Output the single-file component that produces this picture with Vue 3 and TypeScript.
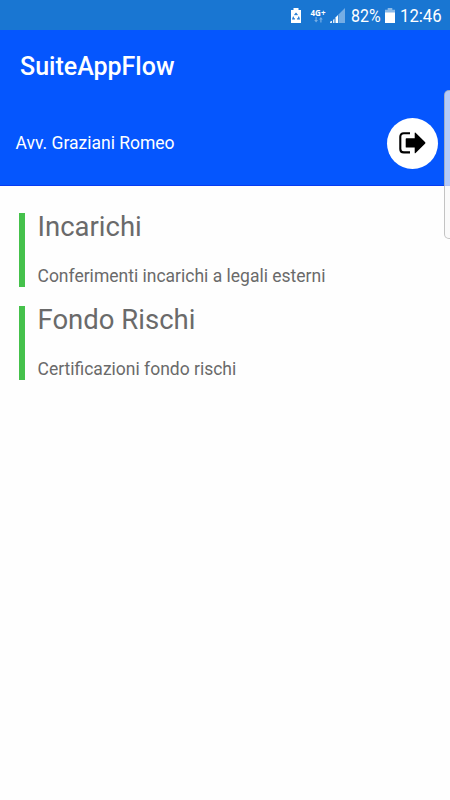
<script setup lang="ts">
interface Section {
  title: string
  description: string
}

const sections: Section[] = [
  { title: 'Incarichi', description: 'Conferimenti incarichi a legali esterni' },
  { title: 'Fondo Rischi', description: 'Certificazioni fondo rischi' },
]
</script>

<template>
  <div class="screen">
    <div class="status">
      <svg class="saver" width="10" height="15" viewBox="0 0 10 15">
        <path d="M0 2h2.5V0h5v2H10v13H0z" fill="#fff" />
        <path d="M3.6 7.2 5 5.4l1.4 1.8M7.5 8.6l.7 2.2H6.1M3.9 10.8H1.8l.7-2.2" fill="none" stroke="#1976d2" stroke-width="1.2" />
      </svg>
      <div class="network">
        <span class="net-label">4G+</span>
        <svg width="9" height="6" viewBox="0 0 9 6">
          <path d="M1.5 0h1.2v3H4L2.1 5.5.2 3h1.3zM6.3 5.5h1.2v-3h1.3L6.9 0 5 2.5h1.3z" fill="#75ade4" />
        </svg>
      </div>
      <svg class="signal" width="15" height="15" viewBox="0 0 15 15">
        <path d="M8.5 6.5 15 0v15H8.5z" fill="#75ade4" />
        <path d="M0 15v-1l1-1h1v2zM3 15v-3l1.5-1.5V15z" fill="#fff" opacity=".85" />
        <path d="M5.5 15V9.5L8 7V15z" fill="#fff" />
      </svg>
      <span class="percent">82%</span>
      <svg class="battery" width="10" height="15" viewBox="0 0 10 15">
        <path d="M0 1.7h2.7V0h4.6v1.7H10V5H0z" fill="#8bbae8" />
        <path d="M0 4.5h10V15H0z" fill="#fff" />
      </svg>
      <span class="clock">12:46</span>
    </div>

    <header class="header">
      <h1>SuiteAppFlow</h1>
      <div class="account">
        <span class="user">Avv. Graziani Romeo</span>
        <button class="logout" type="button" aria-label="Esci">
          <svg width="27" height="22" viewBox="0 0 27 22">
            <path d="M11 1.3H4.8Q1.3 1.3 1.3 4.8v12.1q0 3.5 3.5 3.5H11" fill="none" stroke="#000" stroke-width="2.1" />
            <path d="M7.4 6.2h8.3V1q0-1 .9-.3L26 10q1 .9 0 1.8L16.6 21q-.9.7-.9-.3v-5.1H7.4q-.7 0-.7-.7v-8q0-.7.7-.7z" fill="#000" />
          </svg>
        </button>
      </div>
    </header>

    <main class="list">
      <section v-for="section in sections" :key="section.title" class="item">
        <h2>{{ section.title }}</h2>
        <p>{{ section.description }}</p>
      </section>
    </main>
    <div class="edge-handle"></div>
  </div>
</template>

<style>
body {
  margin: 0;
  background: #fefefe;
}
</style>

<style scoped>
.screen {
  position: relative;
  width: 450px;
  height: 800px;
  overflow: hidden;
  background: #fefefe;
  font-family: Roboto, sans-serif;
}
.status {
  display: flex;
  align-items: center;
  height: 30px;
  box-sizing: border-box;
  padding: 1px 0 0 291px;
  background: #1976d2;
  color: #fff;
}
.status svg {
  display: block;
  flex: none;
}
.network {
  display: flex;
  flex-direction: column;
  align-items: center;
  width: 16px;
  margin-left: 9px;
}
.net-label {
  font: bold 8px/9px "Open Sans", sans-serif;
}
.signal {
  margin-left: 4px;
}
.percent,
.clock {
  display: block;
  font-size: 19px;
  line-height: 27px;
  transform-origin: left center;
  white-space: nowrap;
}
.percent {
  width: 34px;
  margin-left: 6px;
  transform: scaleX(0.84);
}
.clock {
  margin-left: 5px;
  transform: scaleX(0.88);
}
.header {
  height: 156px;
  box-sizing: border-box;
  border-bottom: 1px solid #083cf0;
  background: #0556fe;
  color: #fff;
}
h1 {
  margin: 0;
  padding: 22px 0 0 20px;
  font-size: 25px;
  font-weight: 500;
  line-height: 30px;
}
.account {
  display: flex;
  align-items: center;
  justify-content: space-between;
  height: 51px;
  margin-top: 35.5px;
  padding: 0 12px 0 15.5px;
}
.user {
  font-size: 17.5px;
}
.logout {
  display: flex;
  align-items: center;
  justify-content: center;
  width: 51px;
  height: 51px;
  padding: 0;
  border: 0;
  border-radius: 50%;
  background: #fff;
}
.list {
  display: flex;
  flex-direction: column;
  gap: 19px;
  padding: 26.5px 19px 0;
}
.item {
  height: 74px;
  box-sizing: border-box;
  padding-left: 12.5px;
  border-left: 6px solid #45c14b;
  color: #6a6a6a;
}
h2 {
  margin: 0;
  font-size: 27.5px;
  font-weight: 400;
  line-height: 28px;
}
p {
  margin: 0;
  padding-top: 25.4px;
  font-size: 17.5px;
  line-height: 20px;
}
.edge-handle {
  position: absolute;
  top: 90px;
  right: -1px;
  width: 7px;
  height: 149px;
  box-sizing: border-box;
  border: 1px solid rgba(150, 150, 150, 0.55);
  border-right: 0;
  border-radius: 5px 0 0 5px;
  background: rgba(248, 248, 248, 0.72);
}
</style>
